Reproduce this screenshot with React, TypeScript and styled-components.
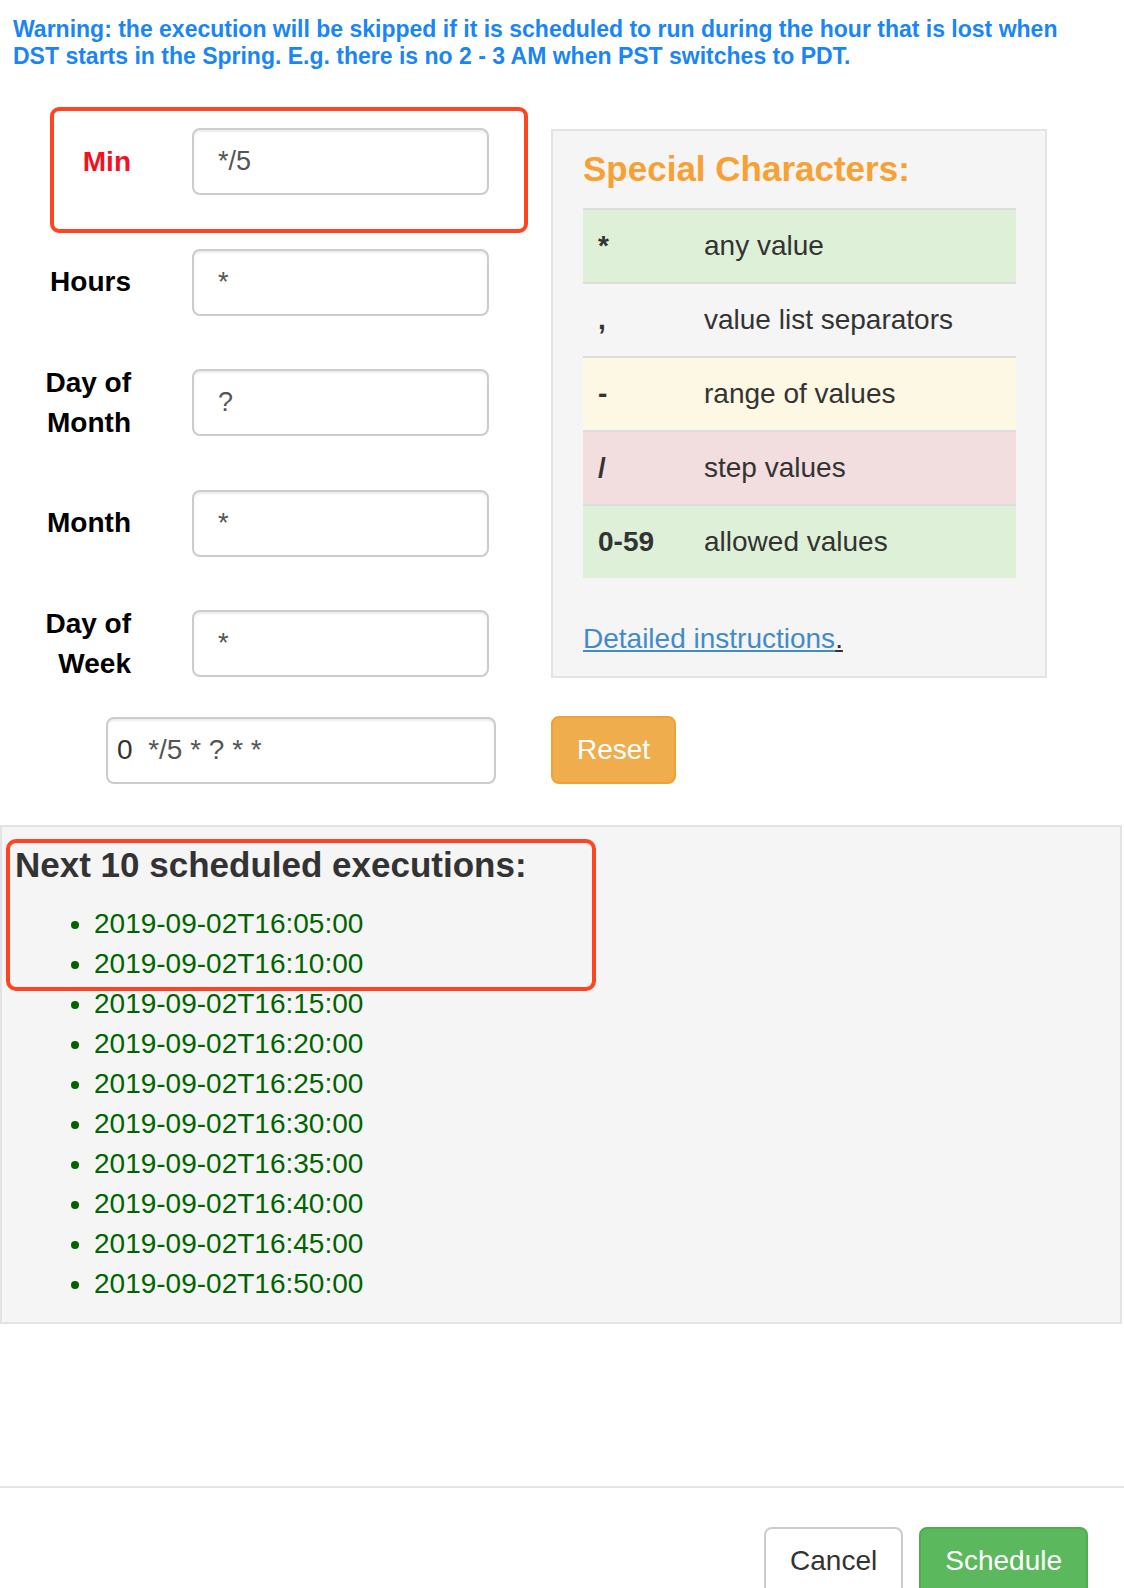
import React from "react"
import styled, { createGlobalStyle, css } from "styled-components"

const GlobalStyle = createGlobalStyle`
  html, body {
    margin: 0;
    padding: 0;
    background: #fff;
  }
  body {
    font-family: "Liberation Sans", Arial, Helvetica, sans-serif;
    color: #333;
  }
  * {
    box-sizing: border-box;
  }
`

const Page = styled.div`
  width: 1124px;
  height: 1588px;
  overflow: hidden;
`

const Warning = styled.p`
  margin: 0;
  padding: 16px 50px 0 13px;
  font-size: 23px;
  line-height: 26.5px;
  font-weight: bold;
  color: #1a85f5;
`

const FormArea = styled.div`
  display: flex;
  align-items: flex-start;
  gap: 62px;
  margin-top: 59px;
`

const Fields = styled.div`
  display: flex;
  flex-direction: column;
  gap: 53.5px;
  width: 489px;
`

const FieldRow = styled.div<{ $highlight?: boolean }>`
  position: relative;
  display: grid;
  grid-template-columns: 131px 297px;
  grid-template-rows: 67px;
  column-gap: 61px;
  align-items: center;
  height: 67px;
  ${(p) =>
    p.$highlight &&
    css`
      &::after {
        content: "";
        position: absolute;
        left: 50px;
        right: -39px;
        top: -21px;
        bottom: -38px;
        border: 4px solid #ff4422;
        border-radius: 9px;
        pointer-events: none;
      }
    `}
`

const FieldLabel = styled.label<{ $active?: boolean }>`
  text-align: right;
  font-size: 28px;
  line-height: 40px;
  font-weight: bold;
  color: ${(p) => (p.$active ? "#f5101e" : "#000")};
`

const FieldInput = styled.input`
  width: 297px;
  height: 67px;
  padding: 0 24px;
  border: 2px solid #ccc;
  border-radius: 8px;
  background: #fff;
  box-shadow: inset 0 2px 2px rgba(0, 0, 0, 0.075);
  font-family: inherit;
  font-size: 27px;
  color: #555;
  outline: none;
`

const Panel = styled.div`
  width: 496px;
  margin-top: 1px;
  padding: 18px 29px 17px 30px;
  background: #f5f5f5;
  border: 2px solid #e3e3e3;
`

const PanelTitle = styled.h4`
  margin: 0 0 19px;
  font-size: 35px;
  line-height: 40px;
  font-weight: bold;
  color: #f8a033;
`

const CharTable = styled.table`
  width: 100%;
  border-collapse: collapse;
`

type Tone = "success" | "warning" | "danger" | "plain"

const toneBg: Record<Tone, string> = {
  success: "#dff0d8",
  warning: "#fcf8e3",
  danger: "#f2dede",
  plain: "transparent",
}

const CharRow = styled.tr<{ $tone: Tone }>`
  background: ${(p) => toneBg[p.$tone]};
`

const SymbolCell = styled.td`
  width: 121px;
  padding: 16px 15px;
  border-top: 2px solid #ddd;
  font-size: 28px;
  line-height: 40px;
  font-weight: bold;
  color: #333;
`

const MeaningCell = styled.td`
  padding: 16px 0;
  border-top: 2px solid #ddd;
  font-size: 28px;
  line-height: 40px;
  color: #333;
`

const LinkLine = styled.p`
  margin: 41px 0 0;
  font-size: 28px;
  line-height: 40px;
  color: #333;
  text-decoration: underline;

  a {
    color: #428bca;
  }
`

const ExpressionRow = styled.div`
  display: flex;
  align-items: center;
  gap: 55px;
  margin-top: 38px;
  padding-left: 106px;
`

const ExpressionBox = styled.div`
  display: flex;
  align-items: center;
  width: 390px;
  height: 67px;
  padding-left: 9px;
  border: 2px solid #ccc;
  border-radius: 8px;
  background: #fff;
  box-shadow: inset 0 2px 2px rgba(0, 0, 0, 0.075);
  font-size: 28px;
  color: #555;
  white-space: pre;
`

const Seconds = styled.span`
  color: #333;
`

const Button = styled.button<{ $variant: "warning" | "success" | "default" }>`
  height: 68px;
  padding: 0 24px;
  border-radius: 8px;
  border: 2px solid;
  font-family: inherit;
  font-size: 28px;
  cursor: pointer;
  ${(p) =>
    p.$variant === "warning"
      ? css`
          background: #f0ad4e;
          border-color: #eea236;
          color: #fff;
        `
      : p.$variant === "success"
      ? css`
          background: #5cb85c;
          border-color: #4cae4c;
          color: #fff;
        `
      : css`
          background: #fff;
          border-color: #ccc;
          color: #333;
        `}
`

const Executions = styled.section`
  position: relative;
  margin-top: 41px;
  width: 1122px;
  padding: 18px 13px;
  background: #f5f5f5;
  border: 2px solid #e3e3e3;
`

const ExecTitle = styled.h4`
  margin: 0 0 19px;
  font-size: 35px;
  line-height: 40px;
  font-weight: bold;
  color: #333;
`

const ExecList = styled.ul`
  margin: 0;
  padding-left: 79px;
`

const ExecItem = styled.li`
  font-size: 28px;
  line-height: 40px;
  color: #006400;
`

const Callout = styled.div`
  position: absolute;
  left: 4px;
  top: 12px;
  width: 590px;
  height: 152px;
  border: 4px solid #ff4422;
  border-radius: 10px;
  pointer-events: none;
`

const Footer = styled.footer`
  display: flex;
  justify-content: flex-end;
  gap: 16px;
  margin-top: 162px;
  padding: 39px 36px 0 0;
  border-top: 2px solid #e5e5e5;
`

const fields = [
  { label: "Min", value: "*/5", active: true },
  { label: "Hours", value: "*" },
  { label: "Day of Month", value: "?" },
  { label: "Month", value: "*" },
  { label: "Day of Week", value: "*" },
]

const specials: { symbol: string; meaning: string; tone: Tone }[] = [
  { symbol: "*", meaning: "any value", tone: "success" },
  { symbol: ",", meaning: "value list separators", tone: "plain" },
  { symbol: "-", meaning: "range of values", tone: "warning" },
  { symbol: "/", meaning: "step values", tone: "danger" },
  { symbol: "0-59", meaning: "allowed values", tone: "success" },
]

const runs = ["05", "10", "15", "20", "25", "30", "35", "40", "45", "50"].map(
  (m) => `2019-09-02T16:${m}:00`
)

export default function App() {
  return (
    <Page>
      <GlobalStyle />
      <Warning>
        Warning: the execution will be skipped if it is scheduled to run during the hour that is
        lost when DST starts in the Spring. E.g. there is no 2 - 3 AM when PST switches to PDT.
      </Warning>

      <FormArea>
        <Fields>
          {fields.map((f) => (
            <FieldRow key={f.label} $highlight={f.active}>
              <FieldLabel $active={f.active}>{f.label}</FieldLabel>
              <FieldInput defaultValue={f.value} />
            </FieldRow>
          ))}
        </Fields>

        <Panel>
          <PanelTitle>Special Characters:</PanelTitle>
          <CharTable>
            <tbody>
              {specials.map((s) => (
                <CharRow key={s.symbol} $tone={s.tone}>
                  <SymbolCell>{s.symbol}</SymbolCell>
                  <MeaningCell>{s.meaning}</MeaningCell>
                </CharRow>
              ))}
            </tbody>
          </CharTable>
          <LinkLine>
            <a href="#">Detailed instructions</a>.
          </LinkLine>
        </Panel>
      </FormArea>

      <ExpressionRow>
        <ExpressionBox>
          <Seconds>0</Seconds>
          {"  */5 * ? * *"}
        </ExpressionBox>
        <Button $variant="warning">Reset</Button>
      </ExpressionRow>

      <Executions>
        <ExecTitle>Next 10 scheduled executions:</ExecTitle>
        <ExecList>
          {runs.map((r) => (
            <ExecItem key={r}>{r}</ExecItem>
          ))}
        </ExecList>
        <Callout />
      </Executions>

      <Footer>
        <Button $variant="default">Cancel</Button>
        <Button $variant="success">Schedule</Button>
      </Footer>
    </Page>
  )
}
